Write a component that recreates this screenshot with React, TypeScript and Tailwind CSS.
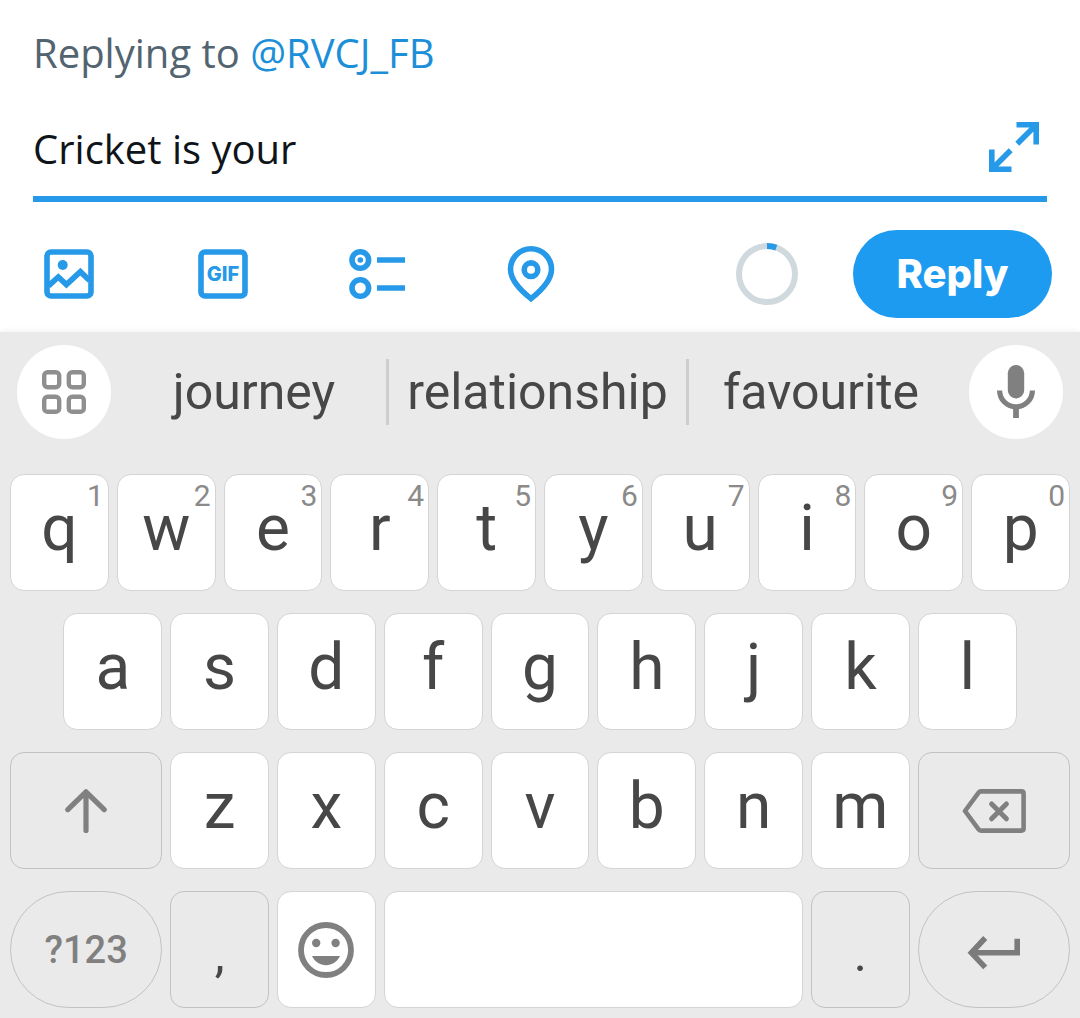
import { useState, type ReactNode } from "react";
import clsx from "clsx";

const MAX_LENGTH = 280;
const RING_LENGTH = 2 * Math.PI * 28;

const TOP_ROW = ["q", "w", "e", "r", "t", "y", "u", "i", "o", "p"];
const HOME_ROW = ["a", "s", "d", "f", "g", "h", "j", "k", "l"];
const BOTTOM_ROW = ["z", "x", "c", "v", "b", "n", "m"];

type KeyProps = {
  label: string;
  onPress?: () => void;
  hint?: string;
  muted?: boolean;
  pill?: boolean;
  className?: string;
  children?: ReactNode;
};

function Key({ label, onPress, hint, muted, pill, className, children }: KeyProps) {
  return (
    <button
      type="button"
      aria-label={label}
      onClick={onPress}
      className={clsx(
        "relative flex h-[117px] items-center justify-center border text-[#474747]",
        muted ? "border-[#c2c2c2] bg-[#eaeaea]" : "border-[#d4d4d4] bg-white",
        pill ? "rounded-full" : "rounded-[14px]",
        className ?? "col-span-2"
      )}
    >
      {hint && (
        <span className="absolute top-[6px] right-1 text-[30px] leading-[30px] text-[#8a8a8a]">
          {hint}
        </span>
      )}
      {children}
    </button>
  );
}

function Letter({ children }: { children: string }) {
  return <span className="pb-2 text-[64px] leading-none">{children}</span>;
}

function Punctuation({ children }: { children: string }) {
  return <span className="pt-2 text-[50px] leading-none">{children}</span>;
}

function ToolButton({ label, children }: { label: string; children: ReactNode }) {
  return (
    <button type="button" aria-label={label} className="size-[72px] shrink-0">
      <svg viewBox="0 0 72 72" className="size-full" fill="none" stroke="#2699e8" strokeWidth="5.6">
        {children}
      </svg>
    </button>
  );
}

function CharacterRing({ count }: { count: number }) {
  const used = Math.min(count / MAX_LENGTH, 1) * RING_LENGTH;
  return (
    <svg viewBox="0 0 62 62" className="size-[62px] shrink-0" fill="none" strokeWidth="6" aria-hidden="true">
      <circle cx="31" cy="31" r="28" stroke="#cfd9de" />
      <circle
        cx="31"
        cy="31"
        r="28"
        stroke="#2699e8"
        strokeDasharray={`${used} ${RING_LENGTH}`}
        transform="rotate(-90 31 31)"
      />
    </svg>
  );
}

export default function App() {
  const [text, setText] = useState("Cricket is your");

  const type = (s: string) => setText((prev) => (prev + s).slice(0, MAX_LENGTH));

  return (
    <div className="flex min-h-screen flex-col bg-white">
      <main className="grow font-['Open_Sans',sans-serif]">
        <div className="px-[33px] pt-[25px] text-[40px] leading-[56px]">
          <p className="text-[#536471]">
            Replying to{" "}
            <a href="#profile" className="text-[#1d8fd8]">
              @RVCJ_FB
            </a>
          </p>

          <div className="mt-[17px] flex h-[104px] items-center border-b-[6px] border-[#2699e8]">
            <input
              type="text"
              aria-label="Your reply"
              value={text}
              onChange={(e) => setText(e.target.value)}
              className="min-w-0 flex-1 bg-transparent pt-1 text-[#0f1419] outline-none"
            />
            <button type="button" aria-label="Expand" className="mr-2">
              <svg viewBox="0 0 50 50" className="size-[50px]" fill="none" stroke="#2699e8" strokeWidth="5.6">
                <path d="M27.5 2.8H47.2V22.5M46 4L28.3 21.7" />
                <path d="M22.5 47.2H2.8V27.5M4 46L21.7 28.3" />
              </svg>
            </button>
          </div>
        </div>

        {/* Composer tools */}
        <div className="flex items-center pt-7 pr-7 pb-[14px] pl-[33px]">
          <div className="flex gap-[82px]">
            <ToolButton label="Add photo">
              <rect x="14" y="14" width="44" height="44" rx="4" />
              <circle cx="29.7" cy="27" r="5" fill="#2699e8" stroke="none" />
              <path d="M15.5 47.8L25.3 39L33.4 46.6L47.4 33.7L56.5 42.4" />
            </ToolButton>
            <ToolButton label="Add GIF">
              <rect x="14" y="14" width="44" height="44" rx="4" />
              <text
                x="36"
                y="43"
                textAnchor="middle"
                fill="#2699e8"
                stroke="none"
                className="font-[Inter,sans-serif] text-[20px] font-extrabold"
              >
                GIF
              </text>
            </ToolButton>
            <ToolButton label="Add poll">
              <circle cx="19.3" cy="22" r="8.3" />
              <circle cx="19.3" cy="22" r="2.8" fill="#2699e8" stroke="none" />
              <circle cx="19.3" cy="50" r="8.3" />
              <path d="M36 22H64M36 50H64" />
            </ToolButton>
            <ToolButton label="Add location">
              <path d="M36 60.6C27 53.5 15.5 42 15.5 31.2A20.5 20.5 0 0 1 56.5 31.2C56.5 42 45 53.5 36 60.6Z" />
              <circle cx="36" cy="31.7" r="6.8" />
            </ToolButton>
          </div>

          <div className="ml-auto flex items-center gap-[55px]">
            <CharacterRing count={text.length} />
            <button
              type="button"
              className="h-[88px] w-[199px] rounded-full bg-[#1d9bf0] font-[Inter,sans-serif] text-[40px] leading-[56px] font-extrabold text-white"
            >
              Reply
            </button>
          </div>
        </div>
      </main>

      <section
        aria-label="Keyboard"
        className="bg-[#eaeaea] px-[10px] pt-[13px] pb-[10px] font-[Roboto,sans-serif] shadow-[0_-1px_6px_rgba(0,0,0,0.06)]"
      >
        {/* Suggestion strip */}
        <div className="flex items-center px-[7px] text-[50px] leading-[66px] text-[#474747]">
          <button
            type="button"
            aria-label="Keyboard tools"
            className="flex size-[94px] shrink-0 items-center justify-center rounded-full bg-white"
          >
            <svg viewBox="0 0 44 44" className="size-11" fill="none" stroke="#8f8f8f" strokeWidth="4.4">
              <rect x="2.2" y="2.2" width="15" height="15" rx="3.4" />
              <rect x="26.8" y="2.2" width="15" height="15" rx="3.4" />
              <rect x="2.2" y="26.8" width="15" height="15" rx="3.4" />
              <rect x="26.8" y="26.8" width="15" height="15" rx="3.4" />
            </svg>
          </button>
          <div className="mr-4 ml-[11px] flex min-w-0 flex-1">
            <button type="button" className="min-w-0 flex-[8]" onClick={() => type(" journey")}>
              journey
            </button>
            <span className="w-[3px] bg-[#cecece]" />
            <button type="button" className="min-w-0 flex-[9]" onClick={() => type(" relationship")}>
              relationship
            </button>
            <span className="w-[3px] bg-[#cecece]" />
            <button type="button" className="min-w-0 flex-[8]" onClick={() => type(" favourite")}>
              favourite
            </button>
          </div>
          <button
            type="button"
            aria-label="Voice input"
            className="flex size-[94px] shrink-0 items-center justify-center rounded-full bg-white"
          >
            <svg viewBox="0 0 38 54" className="h-[54px] w-[38px]" fill="none" stroke="#808080">
              <rect x="10.8" y="0" width="16.4" height="33.4" rx="8.2" fill="#808080" stroke="none" />
              <path d="M2.6 25.4A16.4 16.4 0 0 0 35.4 25.4" strokeWidth="5.2" />
              <path d="M19 42V53" strokeWidth="5.8" />
            </svg>
          </button>
        </div>

        {/* Keys sit on half-key columns */}
        <div className="mt-[35px] grid grid-cols-20 gap-x-2 gap-y-[22px]">
          {TOP_ROW.map((k, i) => (
            <Key key={k} label={k} hint={String((i + 1) % 10)} onPress={() => type(k)}>
              <Letter>{k}</Letter>
            </Key>
          ))}

          {HOME_ROW.map((k, i) => (
            <Key
              key={k}
              label={k}
              onPress={() => type(k)}
              className={i === 0 ? "col-span-2 col-start-2" : undefined}
            >
              <Letter>{k}</Letter>
            </Key>
          ))}

          <Key label="Shift" muted className="col-span-3 col-start-1">
            <svg
              viewBox="0 0 44 44"
              className="size-11"
              fill="none"
              stroke="#808080"
              strokeWidth="5.2"
              strokeLinecap="round"
              strokeLinejoin="round"
            >
              <path d="M22 3V41.4M3.8 20.6L22 2.8L40.2 20.6" />
            </svg>
          </Key>
          {BOTTOM_ROW.map((k) => (
            <Key key={k} label={k} onPress={() => type(k)}>
              <Letter>{k}</Letter>
            </Key>
          ))}
          <Key
            label="Backspace"
            muted
            className="col-span-3"
            onPress={() => setText((prev) => prev.slice(0, -1))}
          >
            <svg
              viewBox="0 0 64 44"
              className="h-11 w-16"
              fill="none"
              stroke="#808080"
              strokeLinejoin="round"
            >
              <path
                d="M19 2.4H59.5Q61.6 2.4 61.6 4.5V39.5Q61.6 41.6 59.5 41.6H19Q17.5 41.6 16.6 40.4L3 22L16.6 3.6Q17.5 2.4 19 2.4Z"
                strokeWidth="4.6"
              />
              <path d="M29.6 15L44.4 29.8M44.4 15L29.6 29.8" strokeWidth="5" strokeLinecap="round" />
            </svg>
          </Key>

          <Key label="Symbols" muted pill className="col-span-3">
            <span className="text-[38px] leading-none font-medium text-[#808080]">?123</span>
          </Key>
          <Key label="Comma" muted onPress={() => type(",")}>
            <Punctuation>,</Punctuation>
          </Key>
          <Key label="Emoji">
            <svg viewBox="0 0 56 56" className="size-14" fill="#808080">
              <circle cx="28" cy="28" r="25" fill="none" stroke="#808080" strokeWidth="5.8" />
              <circle cx="18.2" cy="21" r="4.2" />
              <circle cx="37.6" cy="21" r="4.2" />
              <path d="M14 34H42C39.2 39.8 34 43.2 28 43.2S16.8 39.8 14 34Z" />
            </svg>
          </Key>
          <Key label="Space" className="col-span-8" onPress={() => type(" ")} />
          <Key label="Period" muted onPress={() => type(".")}>
            <Punctuation>.</Punctuation>
          </Key>
          <Key label="Enter" muted pill className="col-span-3">
            <svg viewBox="0 -6 54 40" className="h-10 w-[54px]" fill="none" stroke="#7b7b7b" strokeWidth="5.6">
              <path d="M50.2 2.8V16.8H5" />
              <path d="M18.2 2L4.4 16.8L18.2 31.4" />
            </svg>
          </Key>
        </div>
      </section>
    </div>
  );
}
